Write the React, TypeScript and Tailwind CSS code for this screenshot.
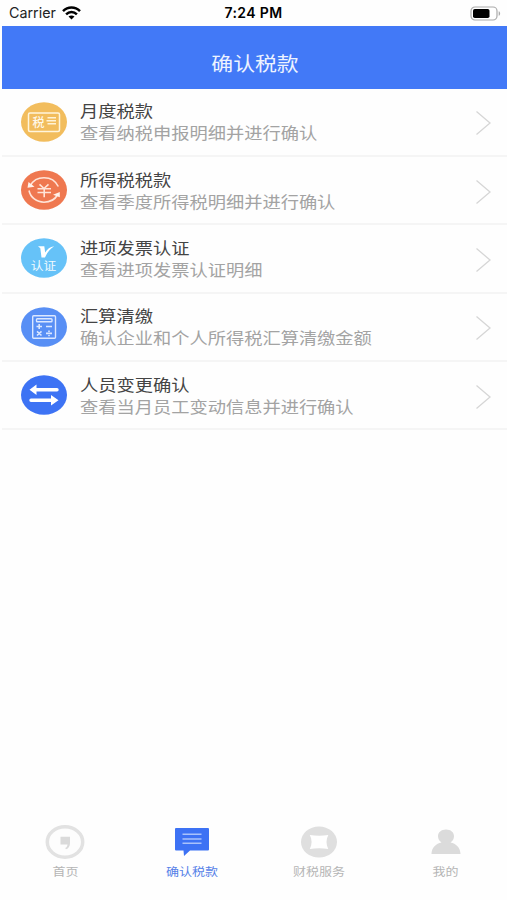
import type { ReactNode } from "react";

interface TaxItem {
  title: string;
  description: string;
  icon: ReactNode;
}

interface Tab {
  label: string;
  icon: ReactNode;
  active?: boolean;
}

const MonthlyIcon = () => (
  <svg width="46" height="40" viewBox="0 0 46 40">
    <ellipse cx="23" cy="20" rx="23" ry="19.7" fill="#f2bd5d" />
    <rect x="7.5" y="11" width="31" height="18.5" rx="1.5" fill="none" stroke="#fff5dc" strokeWidth="1.5" />
    <text x="11.5" y="24.6" fontSize="12" fontWeight="500" fill="#fff8e8">
      税
    </text>
    <path d="M26.5 15.8h8.5M25.5 18.8h9.5M26.5 21.8h8.500" stroke="#fff3d6" strokeWidth="1.5" />
  </svg>
);

const IncomeIcon = () => (
  <svg width="46" height="40" viewBox="0 0 46 40">
    <ellipse cx="23" cy="20" rx="23" ry="19.7" fill="#ef7850" />
    <g fill="none" stroke="#ffe4d8" strokeWidth="1.6">
      <path d="M9.500 15.500C12 10.500 17 7.700 23 7.700c6.500 0 11.700 3.300 14.300 8.800" />
      <path d="M8 20.500c1.500 7 7.500 11.700 15 11.700 6 0 11-2.700 13.800-7.700" />
      <path d="M18.500 14.300l4.500 4.200 4.500-4.200M16.500 18.700h13.500M16.500 22.500h13.500M23.200 18.500v8.800" strokeWidth="1.6" />
    </g>
    <path d="M7.500 12l6 4.800-7 1zM38.800 22v5.200l-6.800-2.500z" fill="#fff1ea" />
  </svg>
);

const InvoiceIcon = () => (
  <svg width="46" height="40" viewBox="0 0 46 40">
    <ellipse cx="23" cy="20" rx="23" ry="19.700" fill="#66c2f8" />
    <path
      d="M17 8.300h6.300l.9 6.200c2-3.500 4.800-5.600 9-6.300-4.300 2.800-7 6.300-9.200 11.300h-3.500l-1.200-9.300z"
      fill="#fff"
    />
    <text x="9.700" y="32.300" fontSize="11.800" textLength="25.500" lengthAdjust="spacingAndGlyphs" fill="#f2fbff">
      认证
    </text>
  </svg>
);

const SettlementIcon = () => (
  <svg width="46" height="40" viewBox="0 0 46 40">
    <ellipse cx="23" cy="20" rx="23" ry="19.700" fill="#588ff5" />
    <g fill="none" stroke="#dbe7ff" strokeWidth="1.400">
      <rect x="11.700" y="8.700" width="22.800" height="22.500" rx="1" />
      <rect x="15.500" y="11.700" width="15.500" height="3" rx="0.800" />
      <path
        d="M15.500 19.500h5.500M18.200 17v5M25 19.500h6M16 24.300l4.500 4.200M20.500 24.300l-4.500 4.200M25 26.400h6M28 23.600v1.300M28 27.900v1.300"
        strokeWidth="1.600"
      />
    </g>
  </svg>
);

const StaffIcon = () => (
  <svg width="46" height="40" viewBox="0 0 46 40">
    <ellipse cx="23" cy="20" rx="23" ry="19.700" fill="#3d73f4" />
    <path d="M13 14.700h23M10 25.200h23" stroke="#fff" strokeWidth="3.400" strokeLinecap="round" />
    <path d="M8.500 14.700l7-5.200v10.400zM37.500 25.200l-7.500-5.200v10.400z" fill="#fff" />
  </svg>
);

const HomeIcon = () => (
  <svg width="42" height="36" viewBox="0 0 42 36">
    <ellipse cx="21" cy="18" rx="17.700" ry="15.200" fill="#fdfdfd" stroke="#e2e2e2" strokeWidth="3.500" />
    <path d="M16.500 12.700h9.500v6.500c0 3-1.500 5.200-4 6l-.8-1.100c1.600-.9 2.200-2 2.300-3.600h-7z" fill="#dadada" />
  </svg>
);

const MessageIcon = () => (
  <svg width="36" height="30" viewBox="0 0 36 30">
    <path d="M2 1h32a1 1 0 0 1 1 1v20.500a1 1 0 0 1-1 1H16L10 29l-.5-5.500H2a1 1 0 0 1-1-1V2a1 1 0 0 1 1-1z" fill="#3d72f4" />
    <path d="M8.500 7.300h19M8.500 12h19M8.500 16.300h19" stroke="#a9c2fb" strokeWidth="1.500" />
  </svg>
);

const ServiceIcon = () => (
  <svg width="38" height="32" viewBox="0 0 38 32">
    <ellipse cx="19" cy="16" rx="18" ry="15.500" fill="#dfdfdf" />
    <path d="M9.800 9c6 1 12.500 1 18.500 0-2.400 4.800-2.400 9.200 0 14-6-1-12.500-1-18.500 0 2.400-4.800 2.400-9.200 0-14z" fill="#fff" />
  </svg>
);

const ProfileIcon = () => (
  <svg width="30" height="26" viewBox="0 0 30 26">
    <path
      d="M15 .5c4.700 0 8 2.800 8 6.700 0 2.700-1.500 4.900-3.500 6.300 5.500 1.200 9.800 4.800 10 11.500h-29c.2-6.700 4.500-10.300 10-11.500C8.500 12.100 7 9.900 7 7.200 7 3.300 10.300.5 15 .5z"
      fill="#dbdbdb"
    />
  </svg>
);

const items: TaxItem[] = [
  { title: "月度税款", description: "查看纳税申报明细并进行确认", icon: <MonthlyIcon /> },
  { title: "所得税税款", description: "查看季度所得税明细并进行确认", icon: <IncomeIcon /> },
  { title: "进项发票认证", description: "查看进项发票认证明细", icon: <InvoiceIcon /> },
  { title: "汇算清缴", description: "确认企业和个人所得税汇算清缴金额", icon: <SettlementIcon /> },
  { title: "人员变更确认", description: "查看当月员工变动信息并进行确认", icon: <StaffIcon /> },
];

const tabs: Tab[] = [
  { label: "首页", icon: <HomeIcon /> },
  { label: "确认税款", icon: <MessageIcon />, active: true },
  { label: "财税服务", icon: <ServiceIcon /> },
  { label: "我的", icon: <ProfileIcon /> },
];

function StatusBar() {
  return (
    <div className="grid h-[25.500px] shrink-0 grid-cols-3 items-center pl-[9px] pr-[6px] pt-[1px] font-['Inter',sans-serif] leading-none text-[#222]">
      <div className="flex items-center gap-[6px]">
        <span className="text-[14.300px]">Carrier</span>
        <svg width="19" height="14" viewBox="0 0 19 14">
          <g fill="none" stroke="#000" strokeWidth="2.500">
            <path d="M1 5.200c4.900-4.900 12.100-4.900 17 0" />
            <path d="M4.100 8.300c3.100-3 7.700-3 10.800 0" />
          </g>
          <path d="M6.500 10.600c1.700-1.600 4.300-1.600 6 0l-3 3z" fill="#000" />
        </svg>
      </div>
      <span className="-ml-[3px] text-center text-[14px] font-semibold tracking-[0.35px] text-black">7:24 PM</span>
      <svg className="justify-self-end" width="31" height="15" viewBox="0 0 31 15">
        <rect x="1" y="1" width="26" height="13" rx="4" fill="#fff" stroke="#aaa" strokeWidth="1.200" />
        <rect x="3" y="3" width="16.500" height="9" rx="1.800" fill="#000" />
        <path d="M28.700 5.200c1.900.7 1.900 3.900 0 4.600z" fill="#aaa" />
      </svg>
    </div>
  );
}

function ItemRow({ title, description, icon }: TaxItem) {
  return (
    <li className="flex h-[68.400px] items-center border-b-2 border-[#f5f5f5] pl-[19px] pr-[15px]">
      <div className="shrink-0">{icon}</div>
      <div className="ml-[13px] flex-1 whitespace-nowrap">
        <p className="-mt-px origin-left scale-x-[1.140] text-[16px] leading-[22px] text-[#444]">{title}</p>
        <p className="origin-left scale-x-[1.140] text-[16px] leading-[22px] text-[#a3a3a3]">{description}</p>
      </div>
      <svg className="mt-[3px] shrink-0" width="17" height="26" viewBox="0 0 17 26">
        <path d="M1.500 1.500L15 13 1.500 24.500" fill="none" stroke="#d6d6d6" strokeWidth="1.300" />
      </svg>
    </li>
  );
}

export default function App() {
  return (
    <div className="flex h-[900px] w-full flex-col overflow-hidden bg-[#fefefe] font-['Noto_Sans_CJK_SC',sans-serif]">
      <StatusBar />
      <header className="ml-[2px] flex h-[63px] shrink-0 items-center justify-center bg-[#4279f7] pl-[2px] pt-[12px]">
        <h1 className="scale-x-[1.120] text-[19.500px] leading-none text-[#edf3ff]">确认税款</h1>
      </header>
      <ul className="ml-[2px]">
        {items.map((item) => (
          <ItemRow key={item.title} {...item} />
        ))}
      </ul>
      <nav className="mt-auto mb-[20px] ml-[2px] -mr-[2px] grid grid-cols-4">
        {tabs.map((tab) => (
          <div key={tab.label} className="flex flex-col items-center gap-[2px]">
            <div className="flex h-[36px] items-center">{tab.icon}</div>
            <span
              className={`scale-x-[1.130] text-[11.500px] leading-[18px] ${
                tab.active ? "text-[#5681e8]" : "text-[#b5b5b5]"
              }`}
            >
              {tab.label}
            </span>
          </div>
        ))}
      </nav>
    </div>
  );
}
